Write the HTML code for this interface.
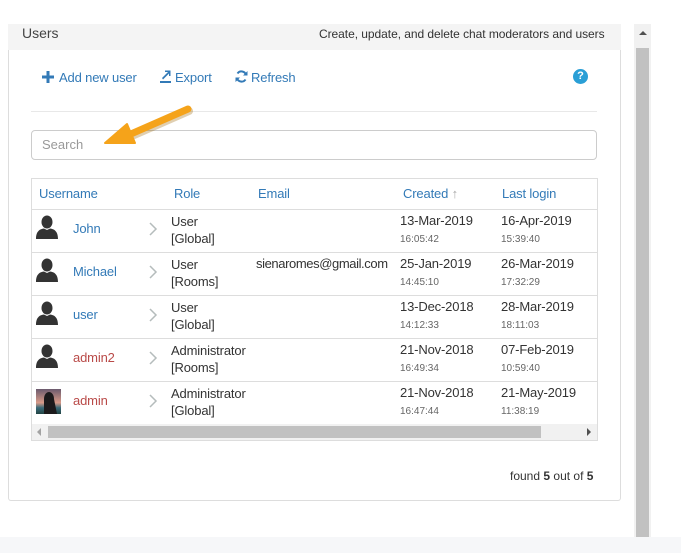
<!DOCTYPE html>
<html><head><meta charset="utf-8"><style>
*{margin:0;padding:0;box-sizing:border-box}
body{width:681px;height:553px;background:#fff;font-family:"Liberation Sans",Arial,sans-serif;position:relative;overflow:hidden;color:#333}
.a{position:absolute;white-space:nowrap}
.blue{color:#337ab7}
.red{color:#b94a48}
.t{font-size:13px;letter-spacing:-0.15px}
.s{font-size:10px;color:#666}
.hl{position:absolute;left:32px;width:565px;height:1px;background:#ddd}
</style></head><body>
<div class="a" style="left:8px;top:24px;width:613px;height:477px;border:1px solid #ddd;border-top:none;border-radius:0 0 3px 3px"></div>
<div class="a" style="left:8px;top:24px;width:613px;height:26px;background:#f4f4f4"></div>
<div class="a" style="left:22px;top:25px;font-size:14px;color:#444">Users</div>
<div class="a" style="left:319px;top:27px;font-size:12px;color:#333;letter-spacing:-0.05px">Create, update, and delete chat moderators and users</div>
<svg class="a" style="left:42px;top:71px" width="12" height="12"><path d="M4.5 0h3v4.5H12v3H7.5V12h-3V7.5H0v-3h4.5z" fill="#337ab7"/></svg>
<div class="a blue t" style="left:59px;top:70px">Add new user</div>
<svg class="a" style="left:159px;top:69px" width="13" height="14"><path d="M1 12h11v2H1z M3 9l6-6H6V1.5h5.5V7H10V4.5l-6 6z" fill="#337ab7"/></svg>
<div class="a blue t" style="left:175px;top:70px">Export</div>
<svg class="a" style="left:235px;top:70px" width="13" height="13" viewBox="0 0 13 13"><path d="M11 5A4.7 4.7 0 0 0 2.5 3.5M2 8a4.7 4.7 0 0 0 8.5 1.5" stroke="#337ab7" stroke-width="2" fill="none"/><path d="M12.5 1v4.5H8zM0.5 12V7.5H5z" fill="#337ab7"/></svg>
<div class="a blue t" style="left:251px;top:70px">Refresh</div>
<div class="a" style="left:573px;top:69px;width:15px;height:15px;border-radius:50%;background:#2a9fd6;color:#fff;font-size:11px;font-weight:bold;text-align:center;line-height:15px">?</div>
<div class="a" style="left:31px;top:111px;width:566px;height:1px;background:#e8e8e8"></div>
<div class="a" style="left:31px;top:130px;width:566px;height:30px;border:1px solid #ccc;border-radius:4px"></div>
<div class="a" style="left:42px;top:137px;font-size:13px;color:#999">Search</div>
<svg class="a" style="left:100px;top:100px" width="95" height="50"><path d="M88 9L24 37" stroke="#9a6400" stroke-width="8" stroke-linecap="round" opacity=".3" transform="translate(1,2)"/><path d="M88 9L24 37" stroke="#f5a31a" stroke-width="7" stroke-linecap="round"/><path d="M5 43L27 24L35 43z" fill="#f5a31a" stroke="#f5a31a" stroke-width="2" stroke-linejoin="round"/></svg>
<div class="a" style="left:31px;top:178px;width:567px;height:263px;border:1px solid #ddd"></div>
<div class="a blue t" style="left:39px;top:186px">Username</div>
<div class="a blue t" style="left:174px;top:186px">Role</div>
<div class="a blue t" style="left:258px;top:186px">Email</div>
<div class="a blue t" style="left:403px;top:186px">Created <span style="color:#aaa">&#8593;</span></div>
<div class="a blue t" style="left:502px;top:186px">Last login</div>
<div class="hl" style="top:209px"></div><div class="hl" style="top:252px"></div><div class="hl" style="top:295px"></div><div class="hl" style="top:338px"></div><div class="hl" style="top:381px"></div>

<svg width="0" height="0" style="position:absolute"><defs><g id="u"><ellipse cx="11" cy="7" rx="5.5" ry="6.5" fill="#333"/><path d="M0 24C0 16 4 14 8 13.5L11 15L14 13.5C18 14 22 16 22 24z" fill="#333"/></g><path id="c" d="M1 1l6 6-6 6" stroke="#b5bcbc" stroke-width="1.5" fill="none"/></defs></svg>

<svg class="a" style="left:36px;top:215px" width="22" height="24"><use href="#u"/></svg>
<svg class="a" style="left:36px;top:258px" width="22" height="24"><use href="#u"/></svg>
<svg class="a" style="left:36px;top:301px" width="22" height="24"><use href="#u"/></svg>
<svg class="a" style="left:36px;top:344px" width="22" height="24"><use href="#u"/></svg>
<svg class="a" style="left:36px;top:389px" width="25" height="25"><defs><linearGradient id="g" x1="0" y1="0" x2="0" y2="1"><stop offset="0" stop-color="#6b5a6e"/><stop offset=".55" stop-color="#d89a88"/><stop offset=".75" stop-color="#3a6a78"/><stop offset="1" stop-color="#244"/></linearGradient></defs><rect width="25" height="25" fill="url(#g)"/><path d="M8 25V10c0-5 3-7 5-7s5 2 5 7l3 15z" fill="#1c1a1c"/></svg>

<svg class="a" style="left:149px;top:222px" width="9" height="15"><use href="#c"/></svg>
<svg class="a" style="left:149px;top:265px" width="9" height="15"><use href="#c"/></svg>
<svg class="a" style="left:149px;top:308px" width="9" height="15"><use href="#c"/></svg>
<svg class="a" style="left:149px;top:351px" width="9" height="15"><use href="#c"/></svg>
<svg class="a" style="left:149px;top:394px" width="9" height="15"><use href="#c"/></svg>

<div class="a blue t" style="left:73px;top:221px">John</div>
<div class="a blue t" style="left:73px;top:264px">Michael</div>
<div class="a blue t" style="left:73px;top:307px">user</div>
<div class="a red t" style="left:73px;top:350px">admin2</div>
<div class="a red t" style="left:73px;top:393px">admin</div>

<div class="a t" style="left:171px;top:213px;line-height:17px">User<br>[Global]</div>
<div class="a t" style="left:171px;top:256px;line-height:17px">User<br>[Rooms]</div>
<div class="a t" style="left:171px;top:299px;line-height:17px">User<br>[Global]</div>
<div class="a t" style="left:171px;top:342px;line-height:17px">Administrator<br>[Rooms]</div>
<div class="a t" style="left:171px;top:385px;line-height:17px">Administrator<br>[Global]</div>
<div class="a t" style="left:256px;top:256px;letter-spacing:-0.4px">sienaromes@gmail.com</div>

<div class="a t" style="left:400px;top:213px">13-Mar-2019</div><div class="a s" style="left:400px;top:234px">16:05:42</div>
<div class="a t" style="left:501px;top:213px">16-Apr-2019</div><div class="a s" style="left:501px;top:234px">15:39:40</div>
<div class="a t" style="left:400px;top:256px">25-Jan-2019</div><div class="a s" style="left:400px;top:277px">14:45:10</div>
<div class="a t" style="left:501px;top:256px">26-Mar-2019</div><div class="a s" style="left:501px;top:277px">17:32:29</div>
<div class="a t" style="left:400px;top:299px">13-Dec-2018</div><div class="a s" style="left:400px;top:320px">14:12:33</div>
<div class="a t" style="left:501px;top:299px">28-Mar-2019</div><div class="a s" style="left:501px;top:320px">18:11:03</div>
<div class="a t" style="left:400px;top:342px">21-Nov-2018</div><div class="a s" style="left:400px;top:363px">16:49:34</div>
<div class="a t" style="left:501px;top:342px">07-Feb-2019</div><div class="a s" style="left:501px;top:363px">10:59:40</div>
<div class="a t" style="left:400px;top:385px">21-Nov-2018</div><div class="a s" style="left:400px;top:406px">16:47:44</div>
<div class="a t" style="left:501px;top:385px">21-May-2019</div><div class="a s" style="left:501px;top:406px">11:38:19</div>

<div class="a" style="left:32px;top:424px;width:565px;height:16px;background:#f1f1f1"></div>
<div class="a" style="left:48px;top:426px;width:493px;height:12px;background:#c1c1c1"></div>
<svg class="a" style="left:36px;top:428px" width="6" height="8"><path d="M5 0v8L1 4z" fill="#a3a3a3"/></svg>
<svg class="a" style="left:586px;top:428px" width="6" height="8"><path d="M1 0v8l4-4z" fill="#505050"/></svg>

<div class="a" style="left:510px;top:469px;font-size:12px">found <b>5</b> out of <b>5</b></div>

<div class="a" style="left:634px;top:24px;width:17px;height:513px;background:#f1f1f1"></div>
<div class="a" style="left:636px;top:48px;width:13px;height:489px;background:#c1c1c1"></div>
<svg class="a" style="left:639px;top:30px" width="8" height="6"><path d="M0 5h8L4 1z" fill="#505050"/></svg>
<div class="a" style="left:0;top:537px;width:681px;height:16px;background:#f6f7f9"></div>
</body></html>
